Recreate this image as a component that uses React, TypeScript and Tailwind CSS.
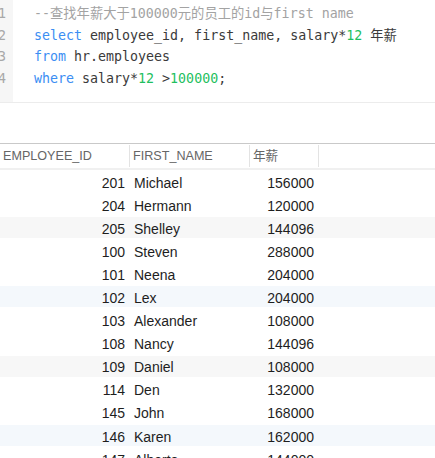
import React from "react";

const rows: [number, string, number][] = [
  [201, "Michael", 156000],
  [204, "Hermann", 120000],
  [205, "Shelley", 144096],
  [100, "Steven", 288000],
  [101, "Neena", 204000],
  [102, "Lex", 204000],
  [103, "Alexander", 108000],
  [108, "Nancy", 144096],
  [109, "Daniel", 108000],
  [114, "Den", 132000],
  [145, "John", 168000],
  [146, "Karen", 162000],
  [147, "Alberto", 144000],
];

const mono = { fontFamily: '"DejaVu Sans Mono", "Noto Sans CJK SC", monospace' };
const sans = { fontFamily: '"Liberation Sans", Arial, "Noto Sans CJK SC", sans-serif' };

function Kw({ children }: { children: React.ReactNode }) {
  return <span className="text-[#3b8ef3]">{children}</span>;
}
function Num({ children }: { children: React.ReactNode }) {
  return <span className="text-[#1fbf5f]">{children}</span>;
}

export default function App() {
  const lines: React.ReactNode[] = [
    <span className="text-[#a3a3a3]">--查找年薪大于100000元的员工的id与first name</span>,
    <>
      <Kw>select</Kw> employee_id, first_name, salary*<Num>12</Num> 年薪
    </>,
    <>
      <Kw>from</Kw> hr.employees
    </>,
    <>
      <Kw>where</Kw> salary*<Num>12</Num> &gt;<Num>100000</Num>;
    </>,
  ];
  return (
    <div className="w-[435px] h-[458px] overflow-hidden bg-white relative">
      <div className="flex h-[102px]">
        <div className="w-[13px] bg-[#f6f6f6] overflow-hidden pt-[3px]" style={mono}>
          {[1, 2, 3, 4].map((n) => (
            <div key={n} className="h-[21.7px] flex justify-end items-center pr-[7px] text-[13.3px] text-[#a8a8a8]">
              {n}
            </div>
          ))}
        </div>
        <div className="pl-[21px] pt-[3px] text-[13.3px] text-[#3a3a3a] whitespace-pre" style={mono}>
          {lines.map((l, i) => (
            <div key={i} className="h-[21.7px] flex items-center">
              <span>{l}</span>
            </div>
          ))}
        </div>
      </div>
      <div className="h-px bg-[#ececec]" />
      <div className="h-[40px]" />
      <div className="h-px bg-[#c9c9c9]" />
      <div style={sans}>
        <div className="flex h-[26px] items-center border-b-2 border-[#f0f0f0] text-[12.6px] text-[#666]">
          <div className="w-[130px] h-[22px] flex items-center pl-[3px] pt-px border-r border-[#e3e3e3]">EMPLOYEE_ID</div>
          <div className="w-[120px] h-[22px] flex items-center pl-[3px] pt-px border-r border-[#e3e3e3]">FIRST_NAME</div>
          <div className="w-[69px] h-[22px] flex items-center pl-[3px] pt-px border-r border-[#e3e3e3]">年薪</div>
        </div>
        <div className="pt-px">
          {rows.map(([id, name, sal], i) => {
            const bg = i % 3 === 2 ? (i % 6 === 2 ? "bg-[#f7f7f7]" : "bg-[#f4f8fc]") : "bg-white";
            return (
              <div key={id} className="h-[23.1px]">
                <div className={`flex h-[21px] items-center pt-[3px] text-[14px] text-[#1e1e1e] ${bg}`}>
                  <div className="w-[125px] text-right">{id}</div>
                  <div className="w-[120px] pl-[9px]">{name}</div>
                  <div className="w-[69px] text-right">{sal}</div>
                </div>
              </div>
            );
          })}
        </div>
      </div>
    </div>
  );
}
